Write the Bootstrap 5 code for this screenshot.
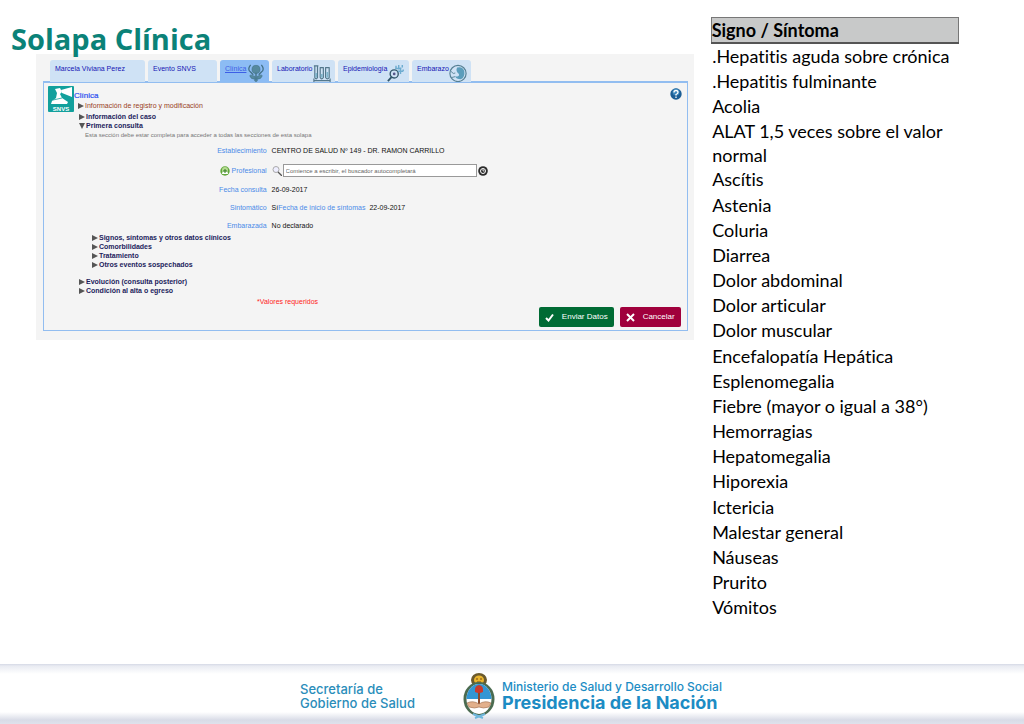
<!DOCTYPE html>
<html lang="es">
<head>
<meta charset="utf-8">
<meta name="viewport" content="width=device-width, initial-scale=1">
<title>Solapa Clínica</title>
<link href="https://cdn.jsdelivr.net/npm/bootstrap@5.3.0/dist/css/bootstrap.min.css" rel="stylesheet">
<script src="https://cdn.jsdelivr.net/npm/bootstrap@5.3.0/dist/js/bootstrap.bundle.min.js" defer></script>
<style>
body{font-family:"Liberation Sans",Arial,sans-serif;background:#fff;color:#000}
.content-side{flex:0 0 69.4%;min-width:0}
.slide-title{font:700 29px/40px "Open Sans","Noto Sans",sans-serif;color:#0b8278;margin:0;padding:19px 0 0 11px;height:54px}
.app-shot{background:#f4f4f4;margin:0 17px 0 36px;padding:6px 6px 9px 7px;font-size:7px;line-height:9px}
.app-tabs{gap:3px;padding-left:7px;border:0}
.app-tabs .nav-link{height:22px;padding:4px 5px 0;border:0;border-radius:3px 3px 0 0;background:#cfe2f5;color:#1414b4;font-size:7px;line-height:10px;display:flex;text-align:left}
.app-tabs .nav-link.active{background:#8cbcf4;color:#3c5fe6;text-decoration:underline}
.app-tabs svg{width:18px;height:18px;flex:none}
.tab-wide{width:95px}.tab-mid{width:69px}.tab-sm{width:49px}.tab-lab{width:63px}.tab-epi{width:71px}.tab-emb{width:59px}
.tab-epi,.tab-emb,.tab-lab,.tab-sm{justify-content:space-between;padding-right:4px!important}
.clin-panel{border:1px solid #92bdf0;border-top-width:2px;padding:3px 5px 3px 4px}
.snvs{width:26px;height:26px;flex:none}
.clin-head{padding-top:5px}
.clin-name{font-size:8px;line-height:10px;color:#2b4ff0;font-weight:400;margin:0;-webkit-text-stroke:.2px}
.fold{display:flex;align-items:center;gap:1px;border:0;background:none;padding:0;font-weight:700;font-size:7px;line-height:9px;color:#1c1c5c}
.fold svg{width:6px;height:6px;flex:none;fill:#555}
.fold-brown{color:#98401c;font-weight:400}
.hint{font-size:6px;line-height:10px;color:#777;margin:0;padding-left:37px}
.pad-a{padding-left:31px}.pad-b{padding-left:44px}
.clin-form{display:grid;grid-template-columns:34.5% 1fr;column-gap:5px;row-gap:8px;padding:6px 0 2px;line-height:10px;align-items:center}
.clin-form label{color:#4a8ae8;font-size:7px}
.clin-form .fl{display:flex;justify-content:flex-end;align-items:center;gap:2px}
.clin-form output{color:#111;font-size:7px}
.finder{width:194px;height:13px;border:1px solid #999;border-radius:0;padding:0 2px;margin:0 1px;font-size:6px;line-height:10px;min-height:0;background:#fff}
.finder::placeholder{color:#666}
.ic{width:10px;height:10px;flex:none}
.req{color:#f22;font-size:7px;margin:0;padding:2px 0 1px 33%}
.actions{gap:6px;padding-right:1px}
.act{height:20px;border:0;border-radius:2px;padding:0 6px;font-size:8px;line-height:20px;color:#fff;display:flex;align-items:center;justify-content:space-between}
.act-ok{background:#006b34;width:75px}.act-no{background:#a0003c;width:61px}
.act svg{width:9px;height:9px}
.sign-side{flex:0 0 248px;padding-top:17px}
.signs{width:100%;font:400 18px/25px "Lato","Open Sans",sans-serif;font-variant-ligatures:none}
.signs th{background:#c8c9c9;border:1px solid #777;border-bottom:2px solid #555;padding:0;line-height:24px}
.signs td{padding:0 0 0 1px;height:25px}
.signs tr:nth-child(6n) td{height:26px}
.signs .two-line{line-height:24px}
.gov-foot{height:60px;background:linear-gradient(#d5d9e5 0,#e9ebf2 2px,#fff 10px,#fff 48px,#d9dce7 56px,#dfe2ec 100%);color:#1c8cc4;font-family:"Inter","Open Sans",sans-serif;gap:3px;padding:3px 0 0 29.3%}
.sec{font-size:13px;line-height:14px;font-weight:500;color:#2a8dba;width:160px}
.min-a{font-size:12px;line-height:14px;font-weight:500}
.min-b{font-size:18px;line-height:17px;font-weight:700}
.crest{width:32px;height:46px;margin-right:4px}
</style>
</head>
<body class="min-vh-100 d-flex flex-column">
<svg class="d-none"><symbol id="tri" viewBox="0 0 6 6"><path d="M0 0L6 3L0 6Z"/></symbol><symbol id="trid" viewBox="0 0 6 6"><path d="M0 0H6L3 6Z"/></symbol></svg>
<main class="d-flex flex-grow-1">
<section class="content-side">
<h1 class="slide-title">Solapa Clínica</h1>
<div class="app-shot">
<nav class="nav nav-tabs app-tabs">
<a class="nav-link tab-wide" href="#">Marcela Viviana Perez</a>
<a class="nav-link tab-mid" href="#">Evento SNVS</a>
<a class="nav-link tab-sm active" href="#">Clínica
<svg viewBox="0 0 20 20"><g fill="#55899f" stroke="#416f85" stroke-width=".6"><circle cx="10" cy="6" r="4.5"/><path d="M4 1Q0 6 4 9L7 12M16 1Q20 6 16 9L13 12" fill="none" stroke-width="1.4"/><path d="M9.300 10H10.700V18H9.300Z"/><path d="M9 14Q4 11 3 13Q4 17 9 17ZM11 14Q16 11 17 13Q16 17 11 17Z"/><circle cx="10" cy="18" r="1.5"/></g></svg></a>
<a class="nav-link tab-lab" href="#">Laboratorio
<svg viewBox="0 0 20 20" fill="none" stroke="#54788c" stroke-width="1.3"><path d="M1 18.5H19M1 2H6M7.500 4H12M13.500 4H18.500M2 2V15Q3.500 18 5 15V2M8 4V15Q9.500 18 11.500 15V4M14 4V15Q16 18 18 15V4M1 16V20M19 16V20"/><path d="M3.500 10V15M9.700 11V15M16 9V15" stroke="#7fb5cc" stroke-width="2"/></svg></a>
<a class="nav-link tab-epi" href="#">Epidemiología
<svg viewBox="0 0 20 20" fill="none"><circle cx="8" cy="11" r="4.500" stroke="#31566a" stroke-width="1.5"/><circle cx="8" cy="11" r="1.500" fill="#558"/><path d="M5 14.500L1 19" stroke="#31566a" stroke-width="2"/><g stroke="#6eacd0" stroke-width="1.6"><path d="M10 2V5M13 1V6M17 1V4M12 8H18M15 4V11M18 6V8M9 5H16"/></g></svg></a>
<a class="nav-link tab-emb" href="#">Embarazo
<svg viewBox="0 0 20 20" fill="none"><circle cx="10" cy="10.500" r="9" stroke="#557f94" stroke-width="1.300"/><path d="M9 4Q15 2 17 8Q18 15 13 17Q8 17 7 14Q12 14 11 11Q7 8 9 4Z" fill="#5b9dbc"/><path d="M2 8Q5 12 7 10M3 15L7 14" stroke="#557f94"/></svg></a>
</nav>
<div class="clin-panel">
<div class="d-flex">
<svg class="snvs" viewBox="0 0 26 26"><rect width="26" height="26" rx="1" fill="#12a09c"/><path d="M7 3L12 2L14 6L12 8L14 12L20 16L19 18H3L4 15L8 12L9 7Z" fill="#fff"/><path d="M13 4L24 1V11L14 7Z" fill="#fff"/><path d="M5 14L14 12" stroke="#12a09c" stroke-width=".8"/><text x="13" y="25" text-anchor="middle" font-size="6" font-weight="700" fill="#fff">SNVS</text></svg>
<div class="flex-grow-1 clin-head">
<h2 class="clin-name">Clínica</h2>
<button type="button" class="fold fold-brown ms-1"><svg><use href="#tri"/></svg>Información de registro y modificación</button>
</div>
<button type="button" class="btn p-0 border-0 align-self-start d-flex" aria-label="Ayuda"><svg width="12" height="14" viewBox="0 0 12 14"><circle cx="6" cy="8" r="5.700" fill="#1c5d94"/><circle cx="6" cy="6" r="3.500" fill="#3d86bb"/><path d="M4 6.500Q4 4.500 6 4.500T8 6.500Q8 7.500 6 8.500V9.500M6 10.500V12" fill="none" stroke="#fff" stroke-width="1.300"/></svg></button>
</div>
<div class="pad-a">
<button type="button" class="fold"><svg><use href="#tri"/></svg>Información del caso</button>
<button type="button" class="fold"><svg><use href="#trid"/></svg>Primera consulta</button>
</div>
<p class="hint">Esta sección debe estar completa para acceder a todas las secciones de esta solapa</p>
<form class="clin-form" onsubmit="return false">
<div class="fl"><label for="est">Establecimiento</label></div><output id="est">CENTRO DE SALUD Nº 149 - DR. RAMON CARRILLO</output>
<div class="fl"><svg class="ic" viewBox="0 0 10 10"><circle cx="5" cy="5" r="4.700" fill="#62a83c"/><circle cx="5" cy="4" r="3" fill="#b5da92"/><path d="M2 8Q2 5 5 5T8 8Z" fill="#fff"/><path d="M5 3V7M3 5H7" stroke="#327a20"/></svg><label for="prof">Profesional</label></div>
<div class="d-flex align-items-center"><svg class="ic" viewBox="0 0 10 10" fill="none"><circle cx="4" cy="3.500" r="3" stroke="#aaa" fill="#eef"/><path d="M6 6L10 10" stroke="#555" stroke-width="1.300"/></svg><input id="prof" type="text" class="finder" placeholder="Comience a escribir, el buscador autocompletará"><svg class="ic" viewBox="0 0 10 10"><circle cx="5" cy="5" r="4.800" fill="#2b2b2b"/><circle cx="5" cy="5" r="2.500" fill="none" stroke="#fff"/><path d="M5 3V5H6.500" stroke="#fff" fill="none" stroke-width=".8"/></svg></div>
<div class="fl"><label for="fc">Fecha consulta</label></div><output id="fc">26-09-2017</output>
<div class="fl"><label for="sin">Sintomático</label></div><div class="d-flex"><output id="sin">Sí</output><label for="fi" class="pe-1">Fecha de inicio de síntomas</label><output id="fi">22-09-2017</output></div>
<div class="fl"><label for="emb">Embarazada</label></div><output id="emb">No declarado</output>
</form>
<div class="pad-b">
<button type="button" class="fold"><svg><use href="#tri"/></svg>Signos, síntomas y otros datos clínicos</button>
<button type="button" class="fold"><svg><use href="#tri"/></svg>Comorbilidades</button>
<button type="button" class="fold"><svg><use href="#tri"/></svg>Tratamiento</button>
<button type="button" class="fold"><svg><use href="#tri"/></svg>Otros eventos sospechados</button>
</div>
<div class="pad-a pt-2">
<button type="button" class="fold"><svg><use href="#tri"/></svg>Evolución (consulta posterior)</button>
<button type="button" class="fold"><svg><use href="#tri"/></svg>Condición al alta o egreso</button>
</div>
<p class="req">*Valores requeridos</p>
<div class="d-flex justify-content-end actions">
<button type="button" class="act act-ok"><svg viewBox="0 0 9 9"><path d="M1 5L3.500 7.500L8 1.500" fill="none" stroke="#fff" stroke-width="2"/></svg>Enviar Datos</button>
<button type="button" class="act act-no"><svg viewBox="0 0 9 9"><path d="M1 1L8 8M8 1L1 8" stroke="#fff" stroke-width="2"/></svg>Cancelar</button>
</div>
</div>
</div>
</section>
<section class="sign-side">
<table class="signs">
<thead><tr><th scope="col">Signo / Síntoma</th></tr></thead>
<tbody>
<tr><td>.Hepatitis aguda sobre crónica</td></tr>
<tr><td>.Hepatitis fulminante</td></tr>
<tr><td>Acolia</td></tr>
<tr><td class="two-line">ALAT 1,5 veces sobre el valor normal</td></tr>
<tr><td>Ascítis</td></tr>
<tr><td>Astenia</td></tr>
<tr><td>Coluria</td></tr>
<tr><td>Diarrea</td></tr>
<tr><td>Dolor abdominal</td></tr>
<tr><td>Dolor articular</td></tr>
<tr><td>Dolor muscular</td></tr>
<tr><td>Encefalopatía Hepática</td></tr>
<tr><td>Esplenomegalia</td></tr>
<tr><td>Fiebre (mayor o igual a 38°)</td></tr>
<tr><td>Hemorragias</td></tr>
<tr><td>Hepatomegalia</td></tr>
<tr><td>Hiporexia</td></tr>
<tr><td>Ictericia</td></tr>
<tr><td>Malestar general</td></tr>
<tr><td>Náuseas</td></tr>
<tr><td>Prurito</td></tr>
<tr><td>Vómitos</td></tr>
</tbody>
</table>
</section>
</main>
<footer class="gov-foot d-flex align-items-center">
<div class="sec">Secretaría de<br>Gobierno de Salud</div>
<svg class="crest" viewBox="0 0 32 46"><ellipse cx="16" cy="7" rx="8" ry="7" fill="#6b5a2c"/><ellipse cx="16" cy="7" rx="5" ry="4.500" fill="#e9b52e"/><path d="M14 5V7M18 5V7M14 9H18" stroke="#7a4b14"/><ellipse cx="16" cy="26" rx="15.500" ry="17" fill="#4b6b50"/><ellipse cx="16" cy="26" rx="12.500" ry="15" fill="#fff"/><path d="M3.500 26A12.500 15 0 0 1 28.500 26Z" fill="#3296d4"/><path d="M15 19H17V33H15Z" fill="#8a4a2c"/><path d="M12 19Q11 13 16 12Q21 13 20 19Q16 21 12 19Z" fill="#c93a2e"/><path d="M4 30Q10 27 16 31Q22 27 28 30L26 34Q20 36 16 34Q12 36 6 34Z" fill="#e2b08c" stroke="#9c6b4c" stroke-width=".6"/><path d="M10 41L20 45M22 41L12 45" stroke="#6fb7dc" stroke-width="2"/></svg>
<div><div class="min-a">Ministerio de Salud y Desarrollo Social</div><div class="min-b">Presidencia de la Nación</div></div>
</footer>
</body>
</html>
